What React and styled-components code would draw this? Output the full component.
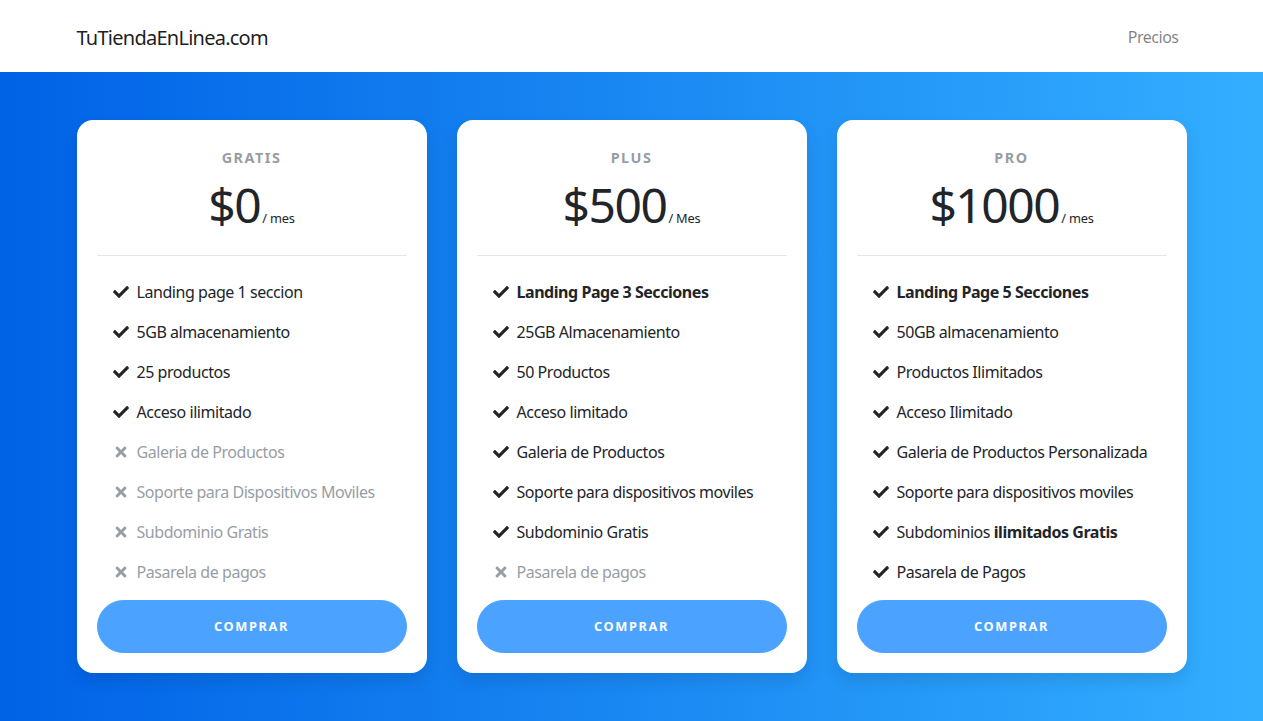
import React from 'react';
import styled, { createGlobalStyle } from 'styled-components';
import { FaCheck, FaTimes } from 'react-icons/fa';

const GlobalStyle = createGlobalStyle`
  * { box-sizing: border-box; }
  body {
    margin: 0;
    font-family: "Noto Sans", "Open Sans", sans-serif;
    color: #212529;
    background: #fff;
  }
`;

const Nav = styled.nav`
  height: 72px;
  background: #fff;
  display: flex;
  align-items: center;
  padding-top: 2px;
`;

const NavInner = styled.div`
  width: 1140px;
  margin: 0 auto;
  padding: 0 15px;
  display: flex;
  align-items: center;
  justify-content: space-between;
`;

const Brand = styled.a`
  font-size: 20px;
  letter-spacing: -0.75px;
  color: rgba(0, 0, 0, 0.9);
  text-decoration: none;
`;

const NavLink = styled.a`
  font-size: 16px;
  letter-spacing: -0.5px;
  color: rgba(0, 0, 0, 0.5);
  text-decoration: none;
  padding-right: 8px;
`;

const Section = styled.section`
  background: linear-gradient(to right, #0062e6, #33aeff);
  padding: 48px 0;
  min-height: calc(100vh - 72px);
`;

const Grid = styled.div`
  width: 1140px;
  margin: 0 auto;
  padding: 0 15px;
  display: grid;
  grid-template-columns: repeat(3, 350px);
  gap: 30px;
`;

const Card = styled.div`
  background: #fff;
  border-radius: 16px;
  box-shadow: 0 8px 16px 0 rgba(0, 0, 0, 0.1);
  padding: 20px;
`;

const PlanName = styled.h5`
  margin: 9px 0 8px;
  font-size: 14.4px;
  line-height: 1.2;
  letter-spacing: 1.5px;
  font-weight: 700;
  text-transform: uppercase;
  text-align: center;
  color: #6c757d;
  opacity: 0.7;
`;

const Price = styled.h6`
  margin: 0;
  padding-top: 2px;
  font-size: 48px;
  line-height: 1.2;
  font-weight: 400;
  letter-spacing: -1.5px;
  text-align: center;
  color: #212529;
`;

const Period = styled.span`
  font-size: 12.8px;
  letter-spacing: -0.2px;
  margin-left: 2px;
`;

const Rule = styled.hr`
  margin: 21px 0 24px;
  border: 0;
  border-top: 1px solid rgba(0, 0, 0, 0.1);
`;

const Features = styled.ul`
  list-style: none;
  margin: 0 0 16px;
  padding: 0;
`;

const Feature = styled.li`
  display: flex;
  align-items: center;
  font-size: 16px;
  line-height: 24px;
  letter-spacing: -0.45px;
  margin-bottom: 16px;
  color: ${({ off }) => (off ? '#6c757d' : '#212529')};
  opacity: ${({ off }) => (off ? 0.7 : 1)};

  &:last-child { margin-bottom: 0; }
`;

const Icon = styled.span`
  width: 16px;
  margin: 0 8px 0 16px;
  display: flex;
  justify-content: center;
  font-size: 16px;
`;

const Button = styled.button`
  display: block;
  width: 100%;
  border: 1px solid #007bff;
  background: #007bff;
  opacity: 0.7;
  color: #fff;
  font-family: inherit;
  font-size: 12.8px;
  line-height: 1.5;
  font-weight: 700;
  letter-spacing: 1.6px;
  text-transform: uppercase;
  padding: 16px;
  border-radius: 80px;
  cursor: pointer;
`;

const plans = [
  {
    name: 'Gratis',
    price: '$0',
    period: '/ mes',
    features: [
      { text: 'Landing page 1 seccion' },
      { text: '5GB almacenamiento' },
      { text: '25 productos' },
      { text: 'Acceso ilimitado' },
      { text: 'Galeria de Productos', off: true },
      { text: 'Soporte para Dispositivos Moviles', off: true },
      { text: 'Subdominio Gratis', off: true },
      { text: 'Pasarela de pagos', off: true },
    ],
  },
  {
    name: 'Plus',
    price: '$500',
    period: '/ Mes',
    features: [
      { text: <b>Landing Page 3 Secciones</b> },
      { text: '25GB Almacenamiento' },
      { text: '50 Productos' },
      { text: 'Acceso limitado' },
      { text: 'Galeria de Productos' },
      { text: 'Soporte para dispositivos moviles' },
      { text: 'Subdominio Gratis' },
      { text: 'Pasarela de pagos', off: true },
    ],
  },
  {
    name: 'Pro',
    price: '$1000',
    period: '/ mes',
    features: [
      { text: <b>Landing Page 5 Secciones</b> },
      { text: '50GB almacenamiento' },
      { text: 'Productos Ilimitados' },
      { text: 'Acceso Ilimitado' },
      { text: 'Galeria de Productos Personalizada' },
      { text: 'Soporte para dispositivos moviles' },
      { text: <>Subdominios <b>ilimitados Gratis</b></> },
      { text: 'Pasarela de Pagos' },
    ],
  },
];

const App = () => (
  <>
    <GlobalStyle />
    <Nav>
      <NavInner>
        <Brand href="#">TuTiendaEnLinea.com</Brand>
        <NavLink href="#">Precios</NavLink>
      </NavInner>
    </Nav>
    <Section>
      <Grid>
        {plans.map((plan) => (
          <Card key={plan.name}>
            <PlanName>{plan.name}</PlanName>
            <Price>
              {plan.price}
              <Period>{plan.period}</Period>
            </Price>
            <Rule />
            <Features>
              {plan.features.map((f, i) => (
                <Feature key={i} off={f.off}>
                  <Icon>{f.off ? <FaTimes /> : <FaCheck />}</Icon>
                  <span>{f.text}</span>
                </Feature>
              ))}
            </Features>
            <Button>Comprar</Button>
          </Card>
        ))}
      </Grid>
    </Section>
  </>
);

export default App;
